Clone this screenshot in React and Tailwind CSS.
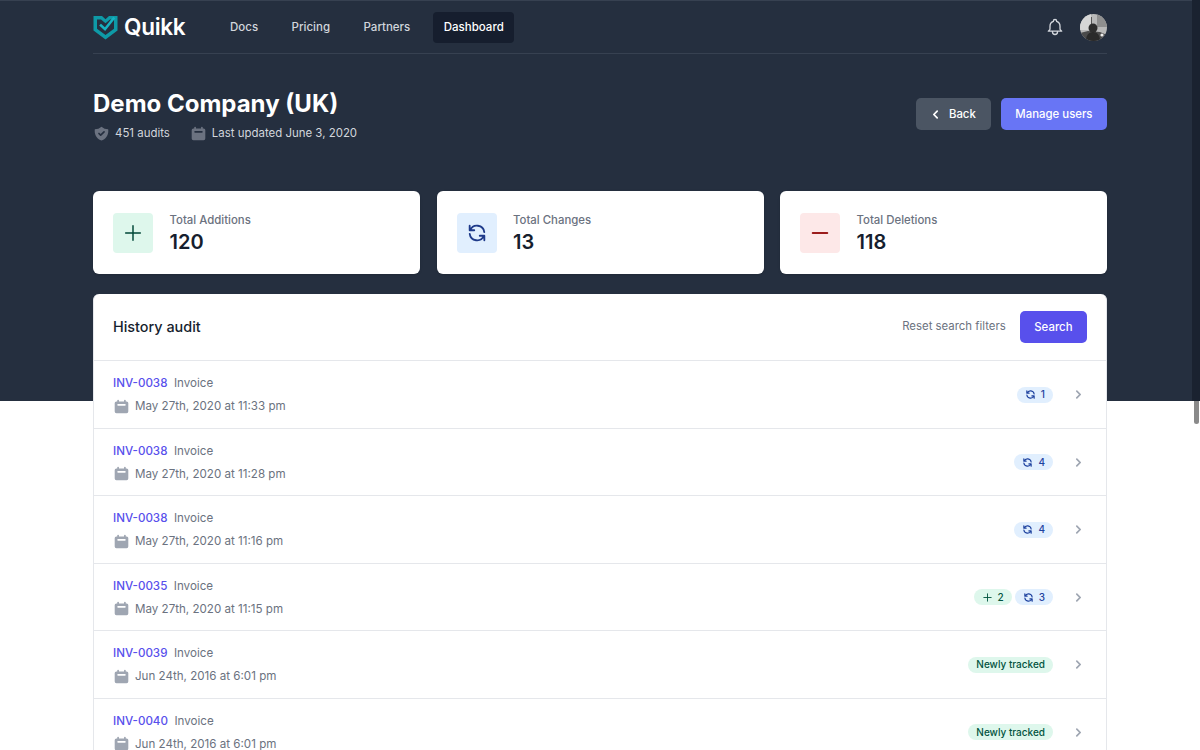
import React from 'react'

const REFRESH = 'M4 4v5h.582m15.356 2A8.001 8.001 0 004.582 9m0 0H9m11 11v-5h-.581m0 0a8.003 8.003 0 01-15.357-2m15.357 2H15'
const PLUS = 'M12 4v16m8-8H4'

const Outline = ({ d, className, width = 2 }) => (
  <svg className={className} viewBox="0 0 24 24" fill="none" stroke="currentColor" strokeWidth={width} strokeLinecap="round" strokeLinejoin="round">
    <path d={d} />
  </svg>
)

const CalendarIcon = ({ className }) => (
  <svg className={className} viewBox="0 0 20 20" fill="currentColor">
    <path fillRule="evenodd" clipRule="evenodd" d="M6 2a1 1 0 00-1 1v1H4a2 2 0 00-2 2v10a2 2 0 002 2h12a2 2 0 002-2V6a2 2 0 00-2-2h-1V3a1 1 0 10-2 0v1H7V3a1 1 0 00-1-1zm0 5a1 1 0 000 2h8a1 1 0 100-2H6z" />
  </svg>
)

const ShieldIcon = ({ className }) => (
  <svg className={className} viewBox="0 0 20 20" fill="currentColor">
    <path fillRule="evenodd" clipRule="evenodd" d="M2.166 4.999A11.954 11.954 0 0010 1.944 11.954 11.954 0 0017.834 5c.11.65.166 1.32.166 2.001 0 5.225-3.34 9.67-8 11.317C5.34 16.67 2 12.225 2 7c0-.682.057-1.35.166-2.001zm11.541 3.708a1 1 0 00-1.414-1.414L9 10.586 7.707 9.293a1 1 0 00-1.414 1.414l2 2a1 1 0 001.414 0l4-4z" />
  </svg>
)

const Chevron = ({ className, left }) => (
  <svg className={className} viewBox="0 0 20 20" fill="currentColor">
    <path
      fillRule="evenodd"
      clipRule="evenodd"
      d={left
        ? 'M12.707 5.293a1 1 0 010 1.414L9.414 10l3.293 3.293a1 1 0 01-1.414 1.414l-4-4a1 1 0 010-1.414l4-4a1 1 0 011.414 0z'
        : 'M7.293 14.707a1 1 0 010-1.414L10.586 10 7.293 6.707a1 1 0 011.414-1.414l4 4a1 1 0 010 1.414l-4 4a1 1 0 01-1.414 0z'}
    />
  </svg>
)

const Logo = () => (
  <svg className="h-[25px] w-[25px]" viewBox="0 0 25 25" fill="none">
    <path d="M0.5 1H9L12.5 4.2L16 1H24.5V15.5L12.5 24.5L0.5 15.5Z" fill="#0e9aa7" />
    <path d="M4 4.5H8L12.5 8.2L17 4.5H21V13.8L12.5 20L4 13.8Z" fill="#252f3f" />
    <path d="M8 10.5L12 14.2L20.5 3.5" stroke="#16b3c2" strokeWidth="2.6" strokeLinecap="square" />
  </svg>
)

const Avatar = () => (
  <svg className="h-[27px] w-[27px] rounded-full" viewBox="0 0 27 27">
    <rect width="27" height="27" fill="#b9b9b9" />
    <rect x="0" y="0" width="11" height="16" fill="#d6d6d6" />
    <rect x="17" y="0" width="10" height="13" fill="#8f8f8f" />
    <rect x="11" y="3" width="1" height="12" fill="#555" />
    <path d="M0 27V19L8 17L20 18L27 21V27Z" fill="#4a4a4a" />
    <circle cx="13" cy="14" r="4.5" fill="#2e2e2e" />
    <path d="M6 27C6 21 9 18 13 18S20 21 20 27Z" fill="#2a2a2a" />
    <circle cx="22" cy="21" r="1.6" fill="#eee" />
  </svg>
)

const stats = [
  { label: 'Total Additions', value: '120', box: 'bg-[#def7ec]', color: 'text-[#014737]', icon: PLUS, width: 1.6 },
  { label: 'Total Changes', value: '13', box: 'bg-[#e1effe]', color: 'text-[#1e3a8a]', icon: REFRESH, width: 2 },
  { label: 'Total Deletions', value: '118', box: 'bg-[#fde8e8]', color: 'text-[#9b1c1c]', icon: 'M20 12H4', width: 2 },
]

const rows = [
  { id: 'INV-0038', date: 'May 27th, 2020 at 11:33 pm', changes: 1 },
  { id: 'INV-0038', date: 'May 27th, 2020 at 11:28 pm', changes: 4 },
  { id: 'INV-0038', date: 'May 27th, 2020 at 11:16 pm', changes: 4 },
  { id: 'INV-0035', date: 'May 27th, 2020 at 11:15 pm', additions: 2, changes: 3 },
  { id: 'INV-0039', date: 'Jun 24th, 2016 at 6:01 pm', tracked: true },
  { id: 'INV-0040', date: 'Jun 24th, 2016 at 6:01 pm', tracked: true },
]

const NavLink = ({ children, active }) => (
  <a className={`flex h-[31px] items-center rounded-[4px] px-[10.5px] pt-[2px] text-[11.5px] font-medium ${active ? 'bg-[#161e2e] text-white' : 'text-[#d2d6dc]'}`}>
    {children}
  </a>
)

const AuditRow = ({ row }) => (
  <div className="flex h-[67.5px] items-center justify-between border-t border-[#e5e7eb] pl-[19px] pr-[19px] pt-[0.5px]">
    <div>
      <div className="flex items-center text-[11.6px] leading-[18px]">
        <span className="font-medium text-[#5850ec]">{row.id}</span>
        <span className="ml-[6.5px] text-[#6b7280]">Invoice</span>
      </div>
      <div className="mt-[5px] flex items-center text-[11.6px] leading-[18px] text-[#6b7280]">
        <CalendarIcon className="mr-[5px] h-[17px] w-[17px] text-[#9fa6b2]" />
        {row.date}
      </div>
    </div>
    <div className="flex items-center">
      <div className="flex items-center gap-[3px]">
        {row.additions && (
          <span className="flex h-[16px] items-center gap-[5px] rounded-full bg-[#def7ec] px-[8px] text-[10px] font-medium text-[#03543f]">
            <Outline d={PLUS} className="h-[11px] w-[11px]" />
            {row.additions}
          </span>
        )}
        {row.changes && (
          <span className="flex h-[16px] items-center gap-[5px] rounded-full bg-[#e1effe] px-[8px] text-[10px] font-medium text-[#1e429f]">
            <Outline d={REFRESH} className="h-[11px] w-[11px]" width={2.5} />
            {row.changes}
          </span>
        )}
        {row.tracked && (
          <span className="flex h-[16px] items-center rounded-full bg-[#def7ec] px-[8px] text-[10px] font-medium text-[#03543f]">
            Newly tracked
          </span>
        )}
      </div>
      <Chevron className="ml-[17px] h-[17px] w-[17px] text-[#9fa6b2]" />
    </div>
  </div>
)

export default function App() {
  return (
    <div className="relative h-[750px] overflow-hidden bg-white font-['Inter',sans-serif]">
      <div className="h-[401px] border-t border-[#374151] bg-[#252f3f]">
        <div className="mx-auto w-[1014px]">
          <nav className="flex h-[53px] items-center justify-between border-b border-[#374151]">
            <div className="flex items-center">
              <div className="flex w-[126.5px] items-center gap-[6px]">
                <Logo />
                <span className="text-[22.6px] font-semibold leading-none tracking-[-0.3px] text-white">Quikk</span>
              </div>
              <div className="flex items-center gap-[12.5px]">
                <NavLink>Docs</NavLink>
                <NavLink>Pricing</NavLink>
                <NavLink>Partners</NavLink>
                <NavLink active>Dashboard</NavLink>
              </div>
            </div>
            <div className="flex items-center gap-[15px]">
              <Outline
                d="M15 17h5l-1.405-1.405A2.032 2.032 0 0118 14.158V11a6.002 6.002 0 00-4-5.659V5a2 2 0 10-4 0v.341C7.67 6.165 6 8.388 6 11v3.159c0 .538-.214 1.055-.595 1.436L4 17h5m6 0v1a3 3 0 11-6 0v-1m6 0H9"
                className="h-[20px] w-[20px] text-[#d2d6dc]"
                width={1.6}
              />
              <Avatar />
            </div>
          </nav>
          <div className="flex items-start justify-between pt-[33px]">
            <div>
              <h1 className="mt-[1px] text-[24px] font-bold leading-[32px] text-white">Demo Company (UK)</h1>
              <div className="mt-[4px] flex items-center text-[11.45px] leading-[18px] text-[#d2d6dc]">
                <ShieldIcon className="mr-[5px] h-[17px] w-[17px] text-[#6b7280]" />
                <span>451 audits</span>
                <CalendarIcon className="ml-[20px] mr-[5px] h-[17px] w-[17px] text-[#6b7280]" />
                <span>Last updated June 3, 2020</span>
              </div>
            </div>
            <div className="mt-[11px] flex gap-[10px]">
              <button className="flex h-[32px] items-center rounded-[5px] bg-[#4b5563] pl-[11px] pr-[15px] pt-[1px] text-[11.4px] font-medium text-white">
                <Chevron left className="-mt-[1px] mr-[5px] h-[17px] w-[17px]" />
                Back
              </button>
              <button className="flex h-[32px] items-center rounded-[5px] bg-[#6875f5] px-[14.5px] pt-[1px] text-[11.4px] font-medium text-white">
                Manage users
              </button>
            </div>
          </div>
        </div>
      </div>

      <main className="mx-auto -mt-[210px] w-[1014px]">
        <div className="grid grid-cols-3 gap-[16.5px]">
          {stats.map((stat) => (
            <div key={stat.label} className="flex h-[83px] items-center rounded-[6px] bg-white px-5 shadow-sm">
              <div className={`flex h-10 w-10 items-center justify-center rounded-[4px] ${stat.box} ${stat.color}`}>
                <Outline d={stat.icon} className="h-[22px] w-[22px]" width={stat.width} />
              </div>
              <div className="ml-[16.5px] pt-[2px]">
                <div className="text-[11.4px] font-medium leading-[16px] text-[#6b7280]">{stat.label}</div>
                <div className="mt-[1px] text-[20px] font-semibold leading-[26px] text-[#161e2e]">{stat.value}</div>
              </div>
            </div>
          ))}
        </div>

        <section className="mt-[20px] rounded-t-[6px] border-x border-[#e5e7eb] bg-white">
          <div className="flex h-[66px] items-center justify-between pl-[19px] pr-[19px]">
            <h2 className="text-[14.4px] font-medium text-[#161e2e]">History audit</h2>
            <div className="flex items-center gap-[14px]">
              <span className="text-[11.4px] text-[#6b7280]">Reset search filters</span>
              <button className="flex h-[32px] items-center rounded-[5px] bg-[#5850ec] px-[14.5px] pt-[1px] text-[11.4px] font-medium text-white">
                Search
              </button>
            </div>
          </div>
          {rows.map((row, i) => (
            <AuditRow key={i} row={row} />
          ))}
        </section>
      </main>

      <div className="absolute right-0 top-0 h-[424px] w-[8px]">
        <div className="h-[401px] bg-[#1a2230]" />
        <div className="mx-auto h-[23px] w-[5px] rounded-b-full bg-[#8a8a8a]" />
      </div>
    </div>
  )
}
